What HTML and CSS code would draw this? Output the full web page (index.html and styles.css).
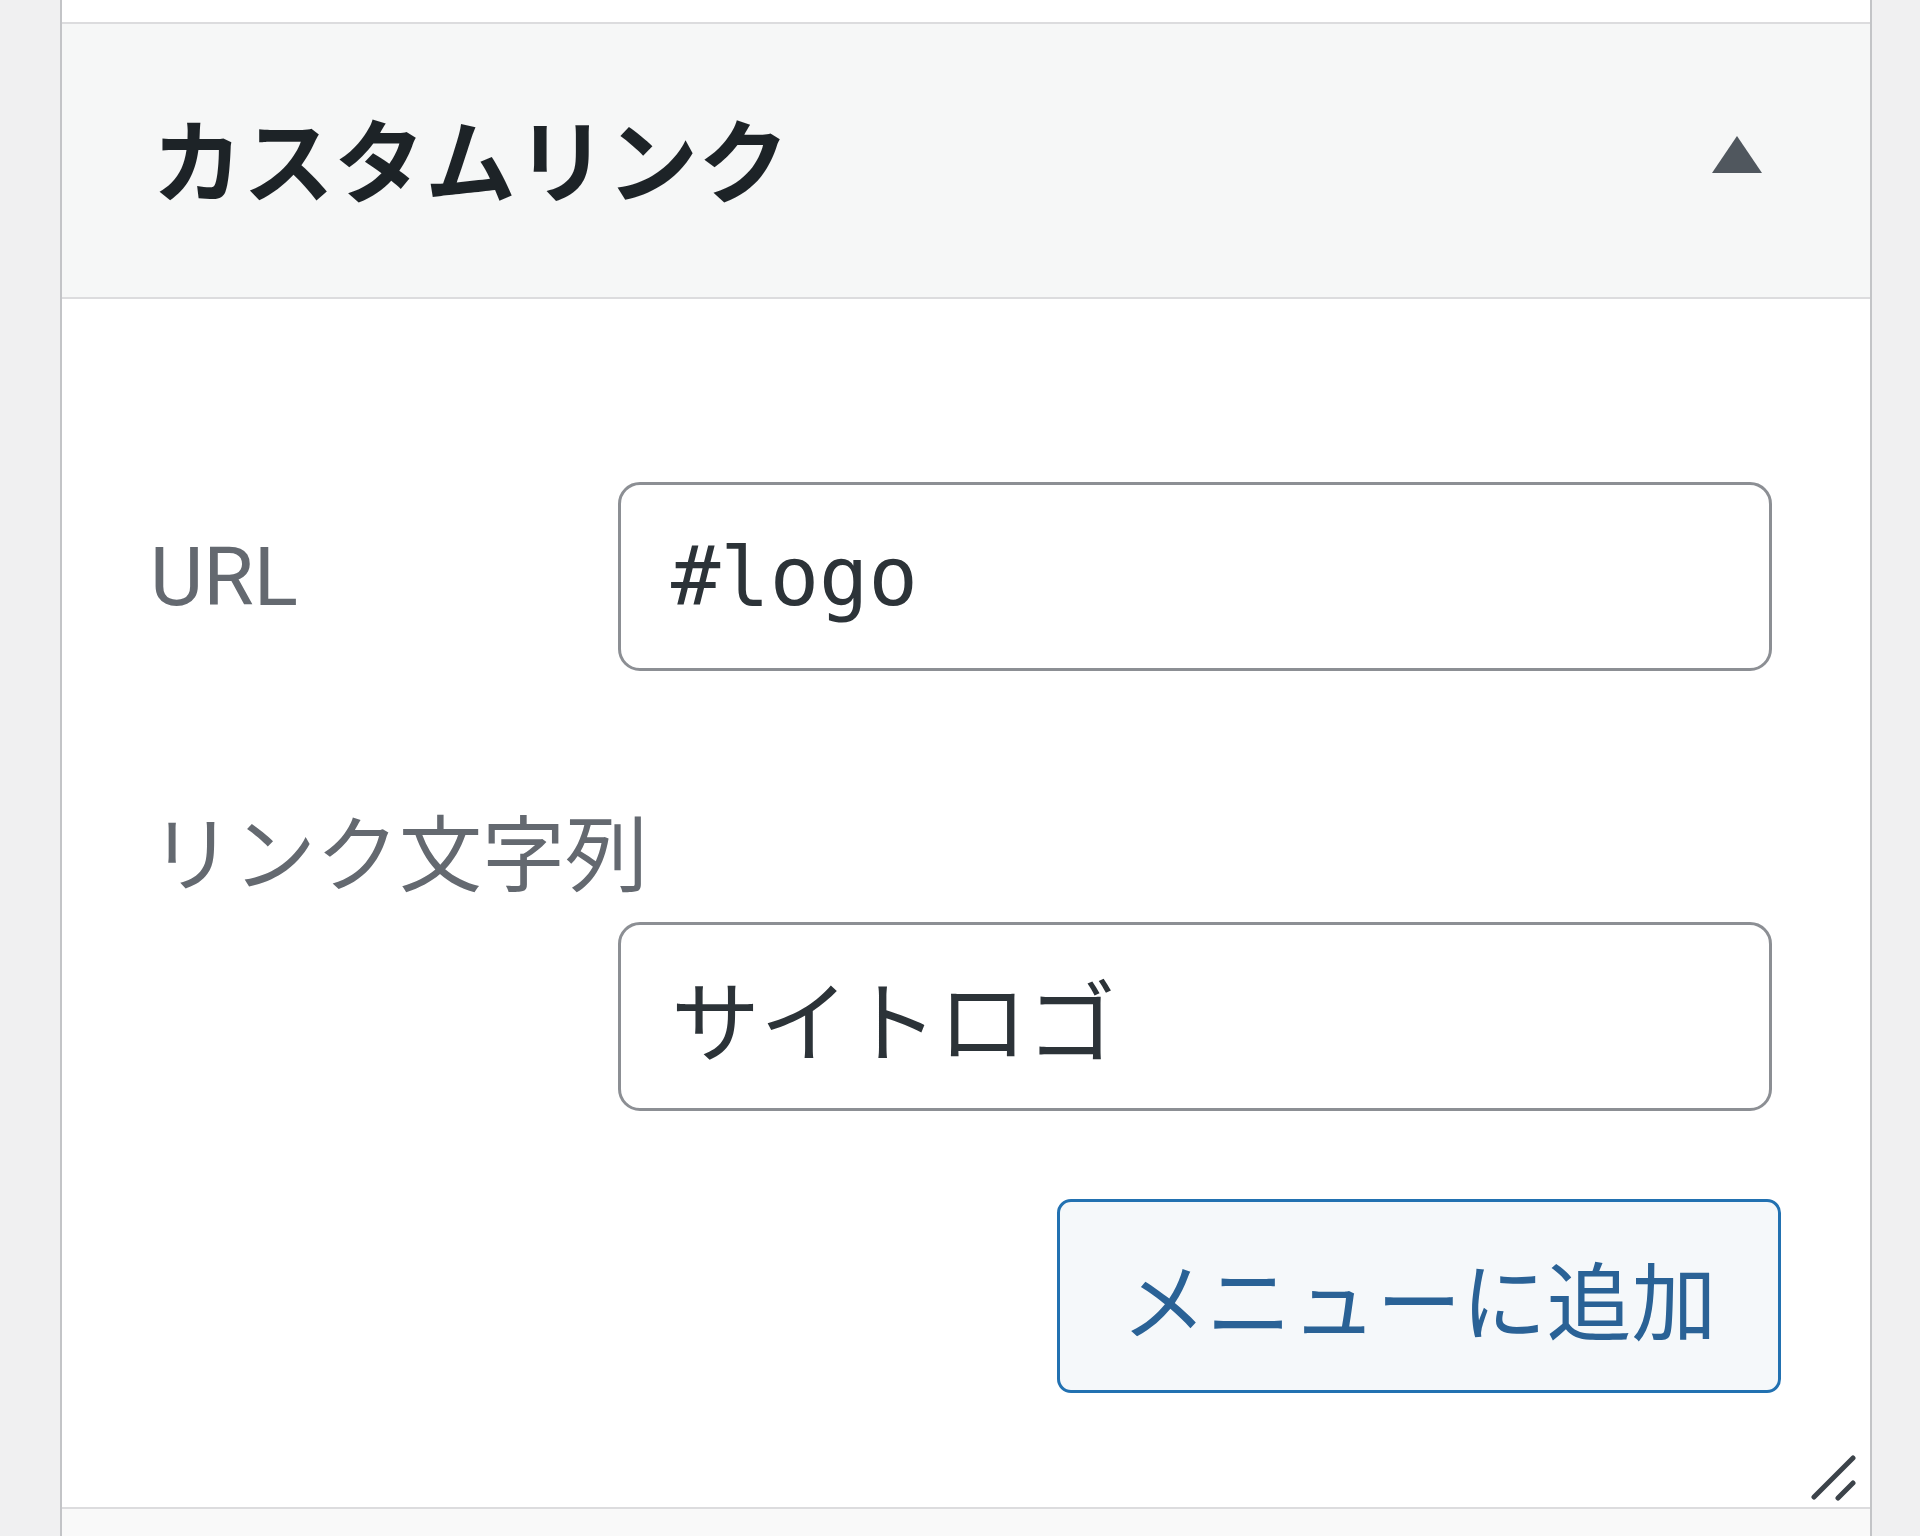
FILE: index.html
```html
<!DOCTYPE html>
<html lang="ja">
<head>
<meta charset="utf-8">
<title>カスタムリンク</title>
<link rel="stylesheet" href="styles.css">
</head>
<body>
<div class="screen">
  <div class="panel">
    <div class="prev-section"></div>
    <section class="section">
      <h3 class="section-title">
        <span class="title-text">カスタムリンク</span>
        <svg class="toggle" width="50" height="37" viewBox="0 0 50 37" aria-hidden="true"><polygon points="25,0 50,37 0,37" fill="#50575e"/></svg>
      </h3>
      <div class="section-body">
        <p class="field field-url">
          <label class="howto" for="custom-menu-item-url">URL</label>
          <input id="custom-menu-item-url" class="textbox code" type="text" value="#logo">
        </p>
        <p class="field field-name">
          <label class="howto" for="custom-menu-item-name">リンク文字列</label>
          <input id="custom-menu-item-name" class="textbox" type="text" value="サイトロゴ">
        </p>
        <p class="button-controls">
          <button class="button" type="button">メニューに追加</button>
        </p>
        <svg class="resize-grip" width="46" height="48" viewBox="0 0 46 48" aria-hidden="true">
          <line x1="3" y1="44" x2="42" y2="5" stroke="#3c434a" stroke-width="5" stroke-linecap="round"/>
          <line x1="27" y1="45" x2="42" y2="30" stroke="#3c434a" stroke-width="5" stroke-linecap="round"/>
        </svg>
      </div>
    </section>
    <div class="next-section"></div>
  </div>
</div>
</body>
</html>
```
FILE: styles.css
```css
html, body {
  margin: 0;
  padding: 0;
}

body {
  background: #f0f0f1;
  font-family: "Noto Sans", "Noto Sans CJK JP", sans-serif;
}

.screen {
  height: 1536px;
  padding: 0 48px 0 60px;
  overflow: hidden;
  background: #f0f0f1;
}

.panel {
  height: 100%;
  background: #fff;
  border-left: 2px solid #c3c4c7;
  border-right: 2px solid #c3c4c7;
  display: flex;
  flex-direction: column;
}

.prev-section {
  height: 22px;
  background: #fff;
}

.section-title {
  margin: 0;
  height: 273px;
  border-top: 2px solid #dcdcde;
  border-bottom: 2px solid #dcdcde;
  background: #f6f7f7;
  display: flex;
  align-items: center;
  justify-content: space-between;
  padding: 0 108px 0 90px;
}

.title-text {
  font-family: "Noto Sans CJK JP", sans-serif;
  font-weight: 700;
  font-size: 91px;
  line-height: 1;
  color: #1d2327;
  margin-top: -8px;
}

.toggle {
  display: block;
  margin-top: -12px;
}

.section-body {
  position: relative;
  height: 1208px;
  box-sizing: border-box;
  padding: 183px 98px 0 88px;
}

.field {
  margin: 0;
  display: flex;
  align-items: center;
}

.field-name {
  flex-wrap: wrap;
  margin-top: 129px;
}

.howto {
  flex: 1;
  font-family: "Roboto", "Noto Sans", "Noto Sans CJK JP", sans-serif;
  font-size: 82px;
  color: #646970;
}

.field-name .howto {
  flex: 0 0 100%;
  line-height: 98px;
  font-family: "Noto Sans CJK JP", sans-serif;
  font-size: 83px;
}

.textbox {
  width: 1154px;
  height: 189px;
  box-sizing: border-box;
  margin: 0;
  border: 3px solid #8c8f94;
  border-radius: 22px;
  padding: 0 50px;
  background: #fff;
  color: #2c3338;
  font-family: "Noto Sans CJK JP", sans-serif;
  font-size: 89px;
  outline: none;
}

.textbox.code {
  font-family: "DejaVu Sans Mono", "Liberation Mono", monospace;
  font-size: 82px;
}

.field-name .textbox {
  margin-left: auto;
  margin-top: 24px;
}

.button-controls {
  margin: 88px -9px 0 0;
  display: flex;
  justify-content: flex-end;
}

.button {
  width: 724px;
  height: 194px;
  box-sizing: border-box;
  border: 3px solid #2271b1;
  border-radius: 14px;
  background: #f5f8fa;
  color: #2a6296;
  font-family: "Noto Sans CJK JP", sans-serif;
  font-size: 85px;
  padding: 0;
  cursor: pointer;
}

.resize-grip {
  position: absolute;
  right: 13px;
  bottom: 6px;
  display: block;
}

.next-section {
  flex: 1;
  border-top: 2px solid #dcdcde;
  background: #f9f9f9;
}
```
